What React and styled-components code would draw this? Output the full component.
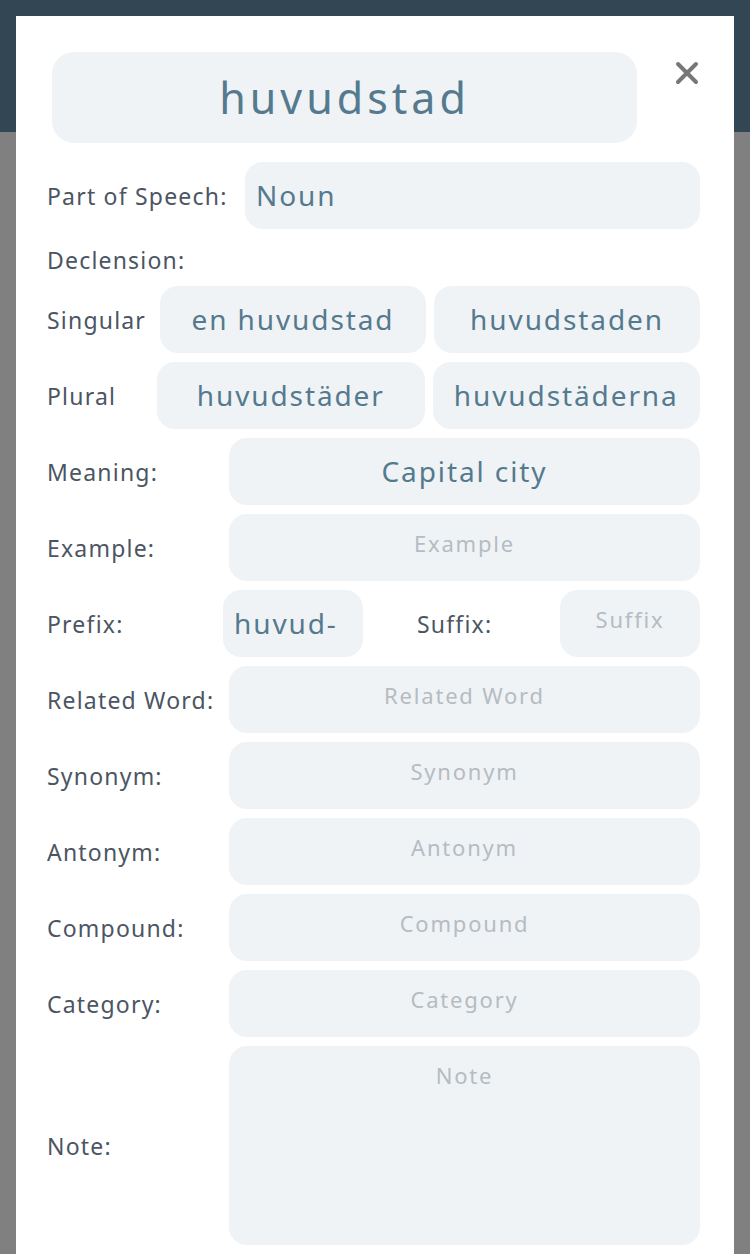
import React from 'react';
import styled, { createGlobalStyle } from 'styled-components';

const GlobalStyle = createGlobalStyle`
  html, body {
    margin: 0;
    padding: 0;
    height: 100%;
    overflow: hidden;
    font-family: 'Noto Sans', 'Open Sans', sans-serif;
  }
`;

const Page = styled.div`
  position: relative;
  width: 750px;
  height: 1254px;
  background: #808080;
  overflow: hidden;
`;

const TopBar = styled.div`
  height: 132px;
  background: #324654;
`;

const Modal = styled.div`
  position: absolute;
  top: 16px;
  left: 16px;
  right: 16px;
  bottom: -40px;
  background: #fff;
  padding: 36px 34px 0 31px;
  box-sizing: border-box;
`;

const Header = styled.div`
  display: flex;
  align-items: flex-start;
  margin-bottom: 19px;
`;

const WordBox = styled.div`
  width: 585px;
  height: 91px;
  margin-left: 5px;
  border-radius: 22px;
  background: #eff3f6;
  color: #557a8e;
  font-size: 43px;
  letter-spacing: 4px;
  display: flex;
  align-items: center;
  justify-content: center;
`;

const CloseButton = styled.button`
  margin: 9px 0 0 38px;
  padding: 0;
  border: none;
  background: none;
  width: 24px;
  height: 24px;
  cursor: pointer;
  display: flex;
`;

const Row = styled.div`
  display: grid;
  grid-template-columns: ${(p) => p.$cols};
  column-gap: ${(p) => p.$gap || 0}px;
  align-items: center;
  height: ${(p) => p.$height || 67}px;
  margin-bottom: 9px;
`;

const Label = styled.div`
  color: #4b5563;
  font-size: 23px;
  letter-spacing: 1.2px;
  white-space: nowrap;
  padding-left: ${(p) => p.$indent || 0}px;
`;

const SectionLabel = styled(Label)`
  height: 44px;
  line-height: 44px;
  margin-bottom: 4px;
`;

const Field = styled.div`
  box-sizing: border-box;
  height: 100%;
  border-radius: 18px;
  background: #eff3f6;
  padding: ${(p) => (p.$left ? '16px 11px' : '16px 6px')};
  text-align: ${(p) => (p.$left ? 'left' : 'center')};
  white-space: nowrap;
  overflow: hidden;
  color: ${(p) => (p.$empty ? '#b5bcc2' : '#557a8e')};
  font-size: ${(p) => (p.$empty ? 22 : 28)}px;
  line-height: ${(p) => (p.$empty ? 26 : 34)}px;
  letter-spacing: ${(p) => (p.$empty ? 1.8 : 1.9)}px;
`;

const Value = ({ value, placeholder, left }) => (
  <Field $empty={!value} $left={left}>
    {value || placeholder}
  </Field>
);

const simpleFields = [
  ['Related Word:', ''],
  ['Synonym:', ''],
  ['Antonym:', ''],
  ['Compound:', ''],
  ['Category:', ''],
];

export default function App() {
  return (
    <Page>
      <GlobalStyle />
      <TopBar />
      <Modal>
        <Header>
          <WordBox>huvudstad</WordBox>
          <CloseButton aria-label="close">
            <svg width="24" height="24" viewBox="0 0 24 24">
              <path d="M3 3 L21 21 M21 3 L3 21" stroke="#777" strokeWidth="4" strokeLinecap="round" />
            </svg>
          </CloseButton>
        </Header>

        <Row $cols="198px 1fr">
          <Label>Part of Speech:</Label>
          <Value value="Noun" left />
        </Row>

        <SectionLabel>Declension:</SectionLabel>

        <Row $cols="105px 1fr 1fr" $gap={8}>
          <Label>Singular</Label>
          <Value value="en huvudstad" />
          <Value value="huvudstaden" />
        </Row>
        <Row $cols="102px 1fr 1fr" $gap={8}>
          <Label>Plural</Label>
          <Value value="huvudstäder" />
          <Value value="huvudstäderna" />
        </Row>

        <Row $cols="182px 1fr">
          <Label>Meaning:</Label>
          <Value value="Capital city" />
        </Row>
        <Row $cols="182px 1fr">
          <Label>Example:</Label>
          <Value placeholder="Example" />
        </Row>

        <Row $cols="176px 140px 1fr 140px">
          <Label>Prefix:</Label>
          <Value value="huvud-" left />
          <Label $indent={54}>Suffix:</Label>
          <Value placeholder="Suffix" />
        </Row>

        {simpleFields.map(([label, value]) => (
          <Row key={label} $cols="182px 1fr">
            <Label>{label}</Label>
            <Value value={value} placeholder={label.replace(':', '')} />
          </Row>
        ))}

        <Row $cols="182px 1fr" $height={199}>
          <Label>Note:</Label>
          <Value placeholder="Note" />
        </Row>
      </Modal>
    </Page>
  );
}
